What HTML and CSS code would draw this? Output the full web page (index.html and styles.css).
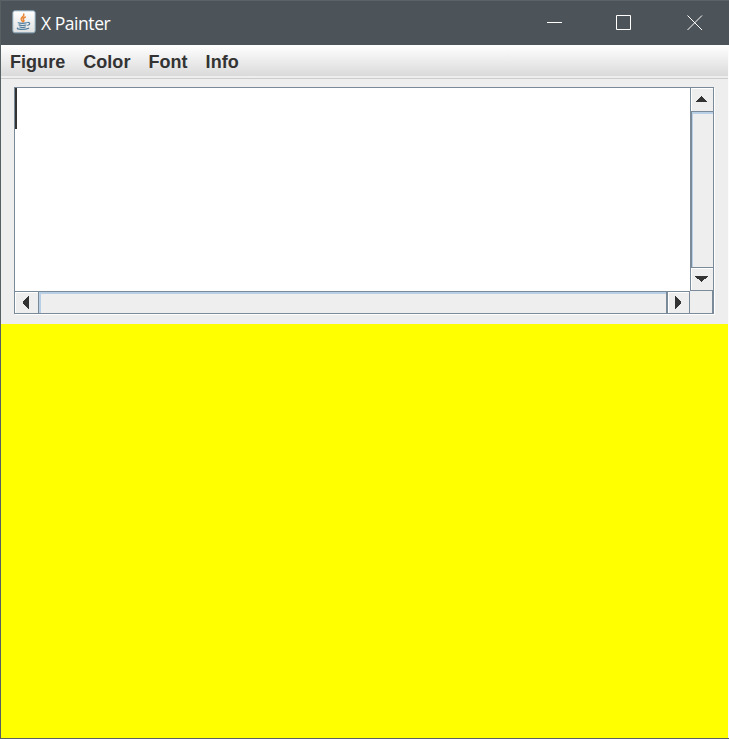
FILE: index.html
```html
<!DOCTYPE html>
<html lang="en">
<head>
<meta charset="utf-8">
<title>X Painter</title>
<link rel="stylesheet" href="styles.css">
</head>
<body>
<div class="window">
  <header class="titlebar">
    <svg class="app-icon" width="24" height="24" viewBox="0 0 24 24">
      <defs><linearGradient id="tile" x2="0" y2="1"><stop stop-color="#fff"/><stop offset="1" stop-color="#dedfe1"/></linearGradient></defs>
      <rect x=".8" y=".8" width="22.4" height="22" rx="2" fill="url(#tile)" stroke="#86a3b5"/>
      <g fill="none" stroke-linecap="round">
        <path d="M11.8 4c1 2.4-3.2 3.2-2.6 5.4.3 1 1.2 1.5 1.5 2.3M13.3 7c-2.8 1.3-2.4 2.3-1.5 3.2.4.5 0 1-.3 1.4" stroke="#e98532" stroke-width="1.5"/>
        <path d="M6.2 12.8c1.5.7 6.5.7 8.3 0M7 14.9c2 .7 5 .7 7 .1M7.8 17c1.8.6 4 .6 5.5 0M15.6 12.5c2.8-.5 2.8 2.2.2 2.8M5.7 18c-2.5 1.4 7 2.2 11 .2" stroke="#537f9f" stroke-width="1.15"/>
      </g>
    </svg>
    <span class="title">X Painter</span>
    <div class="controls">
      <svg width="70" height="44" viewBox="0 0 70 44"><path d="M28 21.5h15"/></svg>
      <svg width="70" height="44" viewBox="0 0 70 44"><path d="M27.5 14.5h14v14h-14z"/></svg>
      <svg width="70" height="44" viewBox="0 0 70 44"><path d="M28.5 14.5l14.5 14.5M43 14.5L28.5 29"/></svg>
    </div>
  </header>
  <nav class="menubar"><span>Figure</span><span>Color</span><span>Font</span><span>Info</span></nav>
  <main class="content">
    <div class="scrollpane">
      <div class="editor"><div class="caret"></div></div>
      <div class="vbar">
        <div class="button up"><svg width="13" height="7" viewBox="0 0 13 7"><path d="M6 0h1v1h1v1h1v1h1v1h1v1h1v1H1V5h1V4h1V3h1V2h1V1h1z"/></svg></div>
        <div class="track"></div>
        <div class="button down"><svg width="13" height="6" viewBox="0 0 13 6"><path d="M0 0h13v1h-1v1h-1v1H9v1H8v1H7v1H6V5H5V4H4V3H2V2H1V1H0z"/></svg></div>
      </div>
      <div class="hbar">
        <div class="button left"><svg width="6" height="13" viewBox="0 0 6 13"><path d="M6 0v13H5v-1H4v-1H3v-1H2V9H1V8H0V5h1V4h1V3h1V2h1V1h1V0z"/></svg></div>
        <div class="track"></div>
        <div class="button right"><svg width="6" height="13" viewBox="0 0 6 13"><path d="M0 0v13h1v-1h1v-1h1v-1h1V9h1V8h1V5H5V4H4V3H3V2H2V1H1V0z"/></svg></div>
      </div>
      <div class="corner"></div>
    </div>
    <div class="canvas"></div>
  </main>
</div>
</body>
</html>
```
FILE: styles.css
```css
* { box-sizing: border-box; }
body { margin: 0; background: #fff; }
svg { display: block; }
.window {
  width: 729px;
  height: 739px;
  display: flex;
  flex-direction: column;
  background: #fcfcfc;
  border-left: 1px solid #596064;
  border-bottom: 1px solid #596064;
  overflow: hidden;
}
.titlebar {
  height: 45px;
  flex: none;
  display: flex;
  background: #4c545a;
  border-top: 1px solid #596369;
  color: #fff;
}
.app-icon { margin: 9px 5px 0 11px; }
.title {
  font: 17.5px/44px "Open Sans", "Noto Sans", sans-serif;
  letter-spacing: -.45px;
}
.controls { display: flex; margin-left: auto; }
.controls path { fill: none; stroke: #fff; stroke-width: 1; }
.menubar {
  height: 34px;
  flex: none;
  display: flex;
  gap: 18px;
  padding-left: 9px;
  margin-right: 1px;
  background: linear-gradient(#fff, #dadada 31px, #eee 31px, #eee 33px, #ccc 33px);
  color: #333;
  font: bold 18px/34px "Liberation Sans", Arial, sans-serif;
  letter-spacing: .04px;
}
.content {
  flex: 1;
  display: flex;
  flex-direction: column;
  margin-right: 1px;
  background: #eee;
}
.scrollpane {
  width: 700px;
  height: 227px;
  flex: none;
  margin: 8px 0 10px 13px;
  border: 1px solid #7a8a99;
  box-shadow: 1px 1px #fff;
  display: grid;
  grid-template: 203px 22px / 675px 23px;
}
.editor { background: #fff; }
.caret { width: 2px; height: 41px; background: #333; }
.vbar {
  border-left: 1px solid #7a8a99;
  display: grid;
  grid-template-rows: 24px 155px 24px;
}
.button {
  display: flex;
  align-items: center;
  justify-content: center;
  background: #eee;
  box-shadow: inset 1px 1px #fff;
}
.button path { fill: #333; shape-rendering: crispEdges; }
.up { border-bottom: 1px solid #7a8a99; padding: 0 2px 0 0; }
.down { border-top: 1px solid #7a8a99; border-bottom: 1px solid #7a8a99; padding: 0 2px 1px 0; }
.vbar .track {
  border-left: 1px solid #7a8a99;
  box-shadow: inset 1px 2px #b8cfe5;
}
.hbar {
  border-top: 1px solid #7a8a99;
  display: grid;
  grid-template-columns: 24px 628px 23px;
}
.left { border-right: 1px solid #7a8a99; padding-right: 1px; }
.right { border-left: 1px solid #7a8a99; border-right: 1px solid #7a8a99; padding-right: 1px; }
.hbar .track {
  border-right: 1px solid #7a8a99;
  box-shadow: inset 2px 2px #b8cfe5;
}
.corner { border-right: 1px solid #7a8a99; }
.canvas { flex: 1; background: #ff0; }
```
